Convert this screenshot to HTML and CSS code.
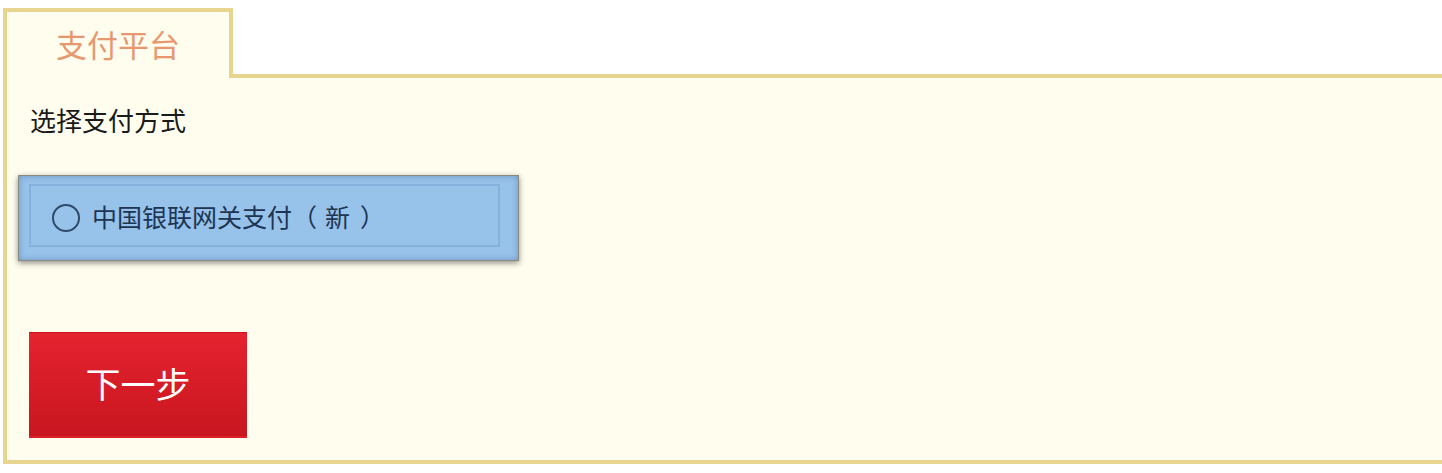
FILE: index.html
```html
<!DOCTYPE html>
<html lang="zh-CN">
<head>
<meta charset="utf-8">
<title>支付平台</title>
<link rel="stylesheet" href="styles.css">
</head>
<body>
<div class="page">
  <div class="tab">支付平台</div>
  <div class="panel">
    <div class="label">选择支付方式</div>
    <div class="pay-option">
      <label class="pay-inner">
        <span class="radio"></span>
        <span class="pay-text">中国银联网关支付<span class="paren-open">（</span>新<span class="paren-close">）</span></span>
      </label>
    </div>
    <button class="next-btn" type="button">下一步</button>
  </div>
</div>
</body>
</html>
```
FILE: styles.css
```css
html, body {
  margin: 0;
  padding: 0;
  overflow: hidden;
  background: #ffffff;
}
body {
  font-family: "Noto Sans CJK SC", "Noto Sans", sans-serif;
}
.page {
  padding: 8px 0 0 3px;
}
.tab {
  position: relative;
  z-index: 1;
  box-sizing: border-box;
  width: 230px;
  height: 70px;
  margin-bottom: -4px;
  border: 4px solid #e7d48f;
  border-bottom: none;
  background: #fffdee;
  color: #e7986e;
  font-size: 31px;
  line-height: 64px;
  text-align: center;
}
.panel {
  box-sizing: border-box;
  border: 4px solid #e7d48f;
  background: #fffdee;
  margin-right: -30px;
  padding: 23px 0 22px 11px;
}
.label {
  padding-left: 12px;
  font-size: 26px;
  line-height: 38px;
  color: #1a1a1a;
}
.pay-option {
  box-sizing: border-box;
  width: 501px;
  height: 86px;
  margin-top: 36px;
  padding: 8px 0 0 10px;
  border: 1px solid #8a8a82;
  background: #97c2ea;
  box-shadow: 0 2px 6px rgba(0, 0, 0, 0.45), inset 0 0 6px rgba(40, 70, 110, 0.35);
}
.pay-inner {
  box-sizing: border-box;
  display: flex;
  align-items: center;
  width: 471px;
  height: 63px;
  padding-left: 21px;
  border: 2px solid #86b1dc;
}
.radio {
  box-sizing: border-box;
  width: 28px;
  height: 28px;
  margin-top: 5px;
  border: 2px solid #2e4b6c;
  border-radius: 50%;
  flex: none;
}
.pay-text {
  margin-left: 12px;
  font-size: 25px;
  color: #1d3553;
}
.paren-open {
  margin-right: 8px;
}
.paren-close {
  margin-left: 10px;
}
.next-btn {
  display: flex;
  align-items: center;
  justify-content: center;
  box-sizing: border-box;
  width: 218px;
  height: 106px;
  margin: 71px 0 0 11px;
  padding: 0 0 4px 0;
  border: none;
  border-top: 1px solid #c8141e;
  border-bottom: 2px solid #df2028;
  background: linear-gradient(#e5232f, #c8161f);
  color: #ffffff;
  font-family: "Noto Sans CJK SC", "Noto Sans", sans-serif;
  font-size: 35px;
}
```
